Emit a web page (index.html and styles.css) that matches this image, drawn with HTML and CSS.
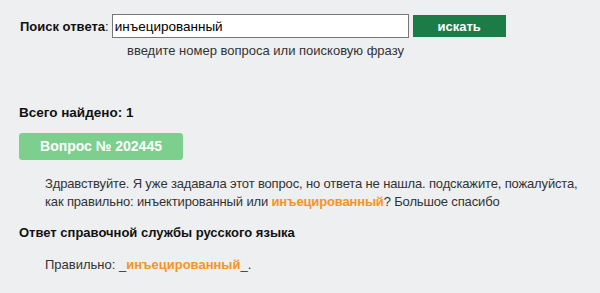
FILE: index.html
```html
<!DOCTYPE html>
<html lang="ru">
<head>
    <meta charset="UTF-8">
    <title>Поиск ответа</title>
    <link rel="stylesheet" href="styles.css">
</head>
<body>

<form class="search">
    <div class="search-row">
        <label class="search-label" for="q">Поиск ответа</label><span class="colon">:</span>
        <input id="q" class="search-input" type="text" value="инъецированный">
        <button class="search-btn" type="button">искать</button>
    </div>
    <div class="search-hint">введите номер вопроса или поисковую фразу</div>
</form>

<div class="found">Всего найдено: 1</div>

<div class="question">
    <div class="question-num">Вопрос № 202445</div>
    <p class="question-text">Здравствуйте. Я уже задавала этот вопрос, но ответа не нашла. подскажите, пожалуйста, как правильно: инъектированный или <b class="hl">инъецированный</b>? Большое спасибо</p>
    <div class="answer-title">Ответ справочной службы русского языка</div>
    <p class="answer-text">Правильно: _<b class="hl">инъецированный</b>_.</p>
</div>

</body>
</html>
```

FILE: styles.css
```css
body {
    margin: 0;
    padding: 14px 10px 0 19px;
    background-color: #eeeff1;
    font-family: "Liberation Sans", Arial, sans-serif;
    font-size: 13px;
    color: #222;
}

.search-row {
    display: flex;
    align-items: center;
}

.search-label {
    font-weight: bold;
    color: #111;
    padding-left: 1px;
}

.colon {
    margin-right: 3px;
}

.search-input {
    width: 297px;
    height: 24px;
    box-sizing: border-box;
    border: 1px solid #777;
    padding: 0 2px;
    font-family: inherit;
    font-size: 13.5px;
    color: #000;
    background: #fff;
}

.search-btn {
    margin-left: 4px;
    width: 93px;
    height: 22px;
    border: none;
    background-color: #1b7c48;
    color: #fff;
    font-family: inherit;
    font-size: 13px;
    font-weight: bold;
    cursor: pointer;
}

.search-hint {
    margin: 5px 0 0 108px;
    color: #333;
}

.found {
    margin-top: 47px;
    font-weight: bold;
    font-size: 13.5px;
    color: #111;
}

.question-num {
    margin-top: 13px;
    width: 164px;
    height: 27px;
    line-height: 27px;
    text-align: center;
    background-color: #7dcf8e;
    color: #fff;
    font-size: 14px;
    font-weight: bold;
    border-radius: 3px;
}

.question-text {
    margin: 15px 0 0 26px;
    line-height: 18px;
    letter-spacing: -0.15px;
    color: #333;
}

.hl {
    color: #f7941d;
}

.answer-title {
    margin-top: 14px;
    font-weight: bold;
    color: #111;
}

.answer-text {
    margin: 17px 0 0 26px;
    color: #333;
}
```
